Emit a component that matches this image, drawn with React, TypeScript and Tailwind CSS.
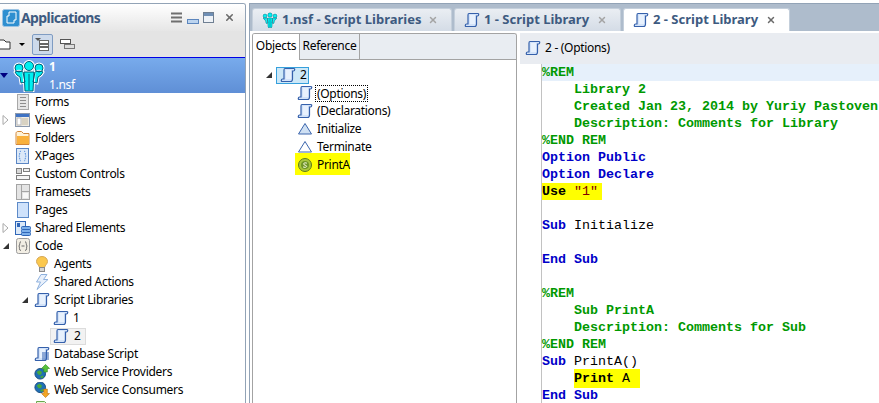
import type { ReactNode } from "react";
import { X } from "lucide-react";

const uiFont = "font-['Noto_Sans','Liberation_Sans',sans-serif]";

function ScrollIcon({ lines = false }: { lines?: boolean }) {
  return (
    <svg width="16" height="16" viewBox="0 0 16 16" className="shrink-0">
      <path d="M5 1.500h9c1 0 1 2.500-.5 2.500H12.500v8c0 1.500-.8 2.500-2 2.500H2c-1 0-1-2.500.5-2.500H4V3c0-1 .3-1.500 1-1.500z" fill="#d3e3f9" stroke="#3560ab" strokeWidth="1.200" />
      <path d="M6 3h5v9H6z" fill="#e8f1fd" />
      {lines && <path d="M8 7h7M8 9h7M8 11h7M8 13h7" stroke="#2f5fb0" strokeWidth="1.200" />}
    </svg>
  );
}

function FormsIcon() {
  return (
    <svg width="16" height="16" viewBox="0 0 16 16" className="shrink-0">
      <rect x="2.500" y="0.500" width="11" height="15" fill="#e6e6e6" stroke="#a8a8a8" />
      <path d="M5 3.500h6M5 6.500h6M5 9.500h6M5 12.500h6" stroke="#8d8d8d" />
    </svg>
  );
}

function ViewsIcon() {
  return (
    <svg width="16" height="16" viewBox="0 0 16 16" className="shrink-0">
      <rect x="0.500" y="1.500" width="14" height="13" fill="#f0ece2" stroke="#8a98ad" />
      <rect x="1" y="2" width="13" height="3" fill="#3f73c4" />
      <rect x="2" y="6" width="4" height="7" fill="#fff" stroke="#b8b8b8" />
      <rect x="7" y="6" width="6" height="7" fill="#d8d2c2" />
    </svg>
  );
}

function FolderIcon() {
  return (
    <svg width="16" height="16" viewBox="0 0 16 16" className="shrink-0">
      <path d="M1 3.500C1 2 2 1.500 3 1.500h3.500l2 2H14v11H1z" fill="#fff3d8" stroke="#d2873a" />
      <rect x="2" y="6" width="12" height="8" fill="#f9b13d" />
    </svg>
  );
}

function XPagesIcon() {
  return (
    <svg width="16" height="16" viewBox="0 0 16 16" className="shrink-0">
      <rect x="1.500" y="0.500" width="12" height="15" fill="#dce9f8" stroke="#5b86c4" />
      <path d="M6 3C4.500 3 5 6.500 4 8c1 1.500.5 5 2 5M9 3c1.500 0 1 3.500 2 5-1 1.500-.5 5-2 5" fill="none" stroke="#4f8bdc" strokeDasharray="1.500 1" />
    </svg>
  );
}

function ControlsIcon() {
  return (
    <svg width="16" height="16" viewBox="0 0 16 16" className="shrink-0">
      <rect x="1.500" y="2.500" width="5" height="5" fill="#d8d8d8" stroke="#7f7f7f" />
      <rect x="8.500" y="2.500" width="6" height="3" fill="#eee" stroke="#7f7f7f" />
      <rect x="1.500" y="9.500" width="13" height="4" fill="#f4f4f4" stroke="#7f7f7f" />
    </svg>
  );
}

function FramesetsIcon() {
  return (
    <svg width="16" height="16" viewBox="0 0 16 16" className="shrink-0">
      <rect x="1.500" y="0.500" width="13" height="15" fill="#e4e4e4" stroke="#a5a5a5" />
      <path d="M6.500 1v14M7 7.500h7" stroke="#a5a5a5" />
      <rect x="8" y="9" width="5" height="5" fill="#f8f8f8" />
    </svg>
  );
}

function PagesIcon() {
  return (
    <svg width="16" height="16" viewBox="0 0 16 16" className="shrink-0">
      <rect x="2.500" y="0.500" width="11" height="15" fill="#cfe2fb" stroke="#5d8ac8" />
    </svg>
  );
}

function SharedIcon() {
  return (
    <svg width="16" height="16" viewBox="0 0 16 16" className="shrink-0">
      <rect x="0.500" y="1.500" width="10" height="13" fill="#dce9f8" stroke="#2f66b8" />
      <rect x="2" y="3" width="3" height="4" fill="#2f66b8" />
      <rect x="6.500" y="6.500" width="9" height="3" rx="1" fill="#7db0ea" stroke="#2f66b8" />
      <rect x="6.500" y="9.500" width="9" height="3" rx="1" fill="#7db0ea" stroke="#2f66b8" />
      <rect x="6.500" y="12.500" width="9" height="3" rx="1" fill="#7db0ea" stroke="#2f66b8" />
    </svg>
  );
}

function CodeIcon() {
  return (
    <svg width="16" height="16" viewBox="0 0 16 16" className="shrink-0">
      <rect x="1.500" y="0.500" width="13" height="15" rx="2" fill="#f2eee4" stroke="#9c9c9c" />
      <path d="M6 3.500C4.500 3.500 5 7 4 8c1 1-.5 4.500 2 4.500M10 3.500c1.500 0 1 3.500 2 4.500-1 1 .5 4.500-2 4.500M6.500 8h3" fill="none" stroke="#6d6d6d" />
    </svg>
  );
}

function BulbIcon() {
  return (
    <svg width="16" height="16" viewBox="0 0 16 16" className="shrink-0">
      <path d="M8 .5c3.500 0 5.500 2.500 5.500 5 0 2.500-2.500 3.500-3 6h-5c-.5-2.500-3-3.500-3-6 0-2.500 2-5 5.500-5z" fill="#fbc84e" stroke="#d5a85a" />
      <rect x="5.500" y="11.500" width="5" height="4" fill="#d6d6d6" stroke="#8a8a8a" />
    </svg>
  );
}

function BoltIcon() {
  return (
    <svg width="16" height="16" viewBox="0 0 16 16" className="shrink-0">
      <path d="M7 .5h6L9.500 5.500H14L3 15.500l3.500-7.500H2.500z" fill="#e8f0fb" stroke="#8db0dd" />
    </svg>
  );
}

function GlobeIcon({ down = false }: { down?: boolean }) {
  return (
    <svg width="16" height="16" viewBox="0 0 18 18" className="shrink-0">
      <circle cx="7" cy={down ? 6 : 11} r="6" fill="#1f6fb5" stroke="#14477c" />
      <path d={down ? "M3 4l3-2 3 2-1 3H5zM7 9l3-1 1 2-3 1z" : "M3 9l3-2 3 2-1 3H5zM7 14l3-1 1 2-3 1z"} fill="#46a83c" />
      {down ? (
        <path d="M11 8h4v5h2.500L13 17.500 8.500 13H11z" fill="#f5a623" stroke="#b97512" strokeWidth="0.700" />
      ) : (
        <path d="M11 9h4V5h2.500L13 .5 8.500 5H11z" fill="#58c23c" stroke="#2c8a1c" strokeWidth="0.700" />
      )}
    </svg>
  );
}

function DocIcon() {
  return (
    <svg width="16" height="16" viewBox="0 0 16 16" className="shrink-0">
      <path d="M2.500 1.500h8l3 3v10h-11z" fill="#e6f4d8" stroke="#6aa84f" />
    </svg>
  );
}

function Triangle({ fill = "#cfe0f3", stroke = "#3c66ad" }: { fill?: string; stroke?: string }) {
  return (
    <svg width="16" height="16" viewBox="0 0 16 16" className="shrink-0">
      <path d="M8 2.500l6.500 10.500h-13z" fill={fill} stroke={stroke} />
    </svg>
  );
}

function SubIcon() {
  return (
    <svg width="16" height="16" viewBox="0 0 16 16" className="shrink-0">
      <circle cx="8" cy="8" r="6.500" fill="#a8c63c" stroke="#5d7a1c" />
      <circle cx="8" cy="8" r="4" fill="#6f9428" />
      <path d="M10 6.300C9 5.500 6.500 5.700 6.500 7s3.200 1 3.200 2.300S7 10.600 6 9.800" fill="none" stroke="#f4f8d8" />
    </svg>
  );
}

function Twist({ open, dark = false }: { open: boolean; dark?: boolean }) {
  if (open) {
    return (
      <svg width="8" height="8" viewBox="0 0 8 8">
        <path d="M7 1v6H1z" fill={dark ? "#000080" : "#333"} />
      </svg>
    );
  }
  return (
    <svg width="7" height="10" viewBox="0 0 7 10">
      <path d="M1 .5l5 4.500-5 4.500z" fill="#fff" stroke="#a8a8a8" />
    </svg>
  );
}

type Row = {
  label: string;
  depth: number;
  icon: ReactNode;
  twist?: "open" | "closed";
  picked?: boolean;
};

const rows: Row[] = [
  { label: "Forms", depth: 0, icon: <FormsIcon /> },
  { label: "Views", depth: 0, icon: <ViewsIcon />, twist: "closed" },
  { label: "Folders", depth: 0, icon: <FolderIcon /> },
  { label: "XPages", depth: 0, icon: <XPagesIcon /> },
  { label: "Custom Controls", depth: 0, icon: <ControlsIcon /> },
  { label: "Framesets", depth: 0, icon: <FramesetsIcon /> },
  { label: "Pages", depth: 0, icon: <PagesIcon /> },
  { label: "Shared Elements", depth: 0, icon: <SharedIcon />, twist: "closed" },
  { label: "Code", depth: 0, icon: <CodeIcon />, twist: "open" },
  { label: "Agents", depth: 1, icon: <BulbIcon /> },
  { label: "Shared Actions", depth: 1, icon: <BoltIcon /> },
  { label: "Script Libraries", depth: 1, icon: <ScrollIcon />, twist: "open" },
  { label: "1", depth: 2, icon: <ScrollIcon /> },
  { label: "2", depth: 2, icon: <ScrollIcon />, picked: true },
  { label: "Database Script", depth: 1, icon: <ScrollIcon lines /> },
  { label: "Web Service Providers", depth: 1, icon: <GlobeIcon /> },
  { label: "Web Service Consumers", depth: 1, icon: <GlobeIcon down /> },
  { label: "Java", depth: 1, icon: <DocIcon /> },
];

const depthPad = ["pl-0", "pl-[19px]", "pl-[38px]"];

function TreeRow({ row }: { row: Row }) {
  return (
    <div className={`flex h-[18px] shrink-0 items-center ${depthPad[row.depth]}`}>
      <span className="flex w-[15px] shrink-0 items-center pl-[2px]">
        {row.twist && <Twist open={row.twist === "open"} />}
      </span>
      {row.picked ? (
        <span className="-ml-[3px] flex h-[17px] items-center gap-[5px] border border-[#dcdcdc] bg-[#f2f2f2] pl-[2px] pr-[4px]">
          {row.icon}
          <span>{row.label}</span>
        </span>
      ) : (
        <>
          {row.icon}
          <span className="ml-[4px] whitespace-nowrap">{row.label}</span>
        </>
      )}
    </div>
  );
}

function AppsIcon() {
  return (
    <svg width="18" height="18" viewBox="0 0 18 18" className="shrink-0">
      <rect x="0.500" y="0.500" width="17" height="17" rx="2" fill="#2f8fd0" stroke="#9cc4e4" />
      <path d="M7 3h7v8h-2v3H5V7h2z" fill="none" stroke="#fff" />
    </svg>
  );
}

function People({ size }: { size: number }) {
  return (
    <svg width={size} height={size} viewBox="0 0 32 32" className="shrink-0">
      <g fill="#00f0f0" stroke="#fff" strokeWidth="3" paintOrder="stroke">
        <circle cx="6" cy="8" r="4" />
        <circle cx="26" cy="8" r="4" />
        <circle cx="16" cy="6" r="4.500" />
        <path d="M2 12c0-1 8-1 8 0l2 10-4 1-1-6-3-2zM30 12c0-1-8-1-8 0l-2 10 4 1 1-6 3-2z" />
        <path d="M11 12h10l-1 19h-8z" />
      </g>
      <g fill="none" stroke="#00607a" strokeWidth="1">
        <circle cx="6" cy="8" r="4" />
        <circle cx="26" cy="8" r="4" />
        <circle cx="16" cy="6" r="4.500" />
        <path d="M2 12c0-1 8-1 8 0l2 10-4 1-1-6-3-2zM30 12c0-1-8-1-8 0l-2 10 4 1 1-6 3-2zM11 12h10l-1 19h-8zM16 14v16" />
      </g>
    </svg>
  );
}

function LeftPanel() {
  return (
    <div className="flex w-[246px] shrink-0 flex-col overflow-hidden rounded-tr-[3px] border-t border-r border-[#92a3b6] bg-white text-[12px] tracking-[-0.3px] text-black">
      <div className="flex h-[27px] shrink-0 items-center bg-gradient-to-b from-white to-[#e6e6e6] pl-[2px]">
        <AppsIcon />
        <span className="ml-[1px] text-[14px] font-bold tracking-[-0.6px] text-[#3d5a80]">Applications</span>
        <div className="ml-auto flex items-center gap-[4px] pr-[10px]">
          <svg width="12" height="11" viewBox="0 0 12 11">
            <path d="M0 1.500h11M0 5.500h11M0 9.500h11" stroke="#6f6f6f" strokeWidth="2" />
          </svg>
          <svg width="12" height="5" viewBox="0 0 12 5" className="mt-[8px]">
            <rect x="0.500" y="0.500" width="11" height="4" fill="#bcd4ef" stroke="#5c86bd" />
          </svg>
          <svg width="12" height="12" viewBox="0 0 12 12">
            <rect x="0.500" y="0.500" width="10" height="10" fill="#eef2f7" stroke="#6f7f92" />
            <rect x="1" y="1" width="9" height="3" fill="#6f8fb5" />
          </svg>
          <X size={11} strokeWidth={3.500} className="ml-[5px] text-[#6b6b6b]" />
        </div>
      </div>
      <div className="flex h-[26px] shrink-0 items-center bg-[#e4e4e4]">
        <svg width="12" height="14" viewBox="0 0 12 14" className="shrink-0">
          <path d="M-2 3h6l2 2h4v7H-2z" fill="#fff" stroke="#333" />
        </svg>
        <span className="ml-[7px] h-0 w-0 border-x-[3px] border-t-[3px] border-x-transparent border-t-black" />
        <span className="ml-[7px] flex h-[21px] w-[21px] items-center justify-center rounded-[2px] border border-[#7f9cc2] bg-[#cddaeb]">
          <svg width="15" height="15" viewBox="0 0 15 15">
            <path d="M0 1h6L3 4z" fill="#555" />
            <rect x="4.500" y="3.500" width="9" height="10" fill="#fff" stroke="#666" />
            <path d="M5 7h8M5 10h8" stroke="#666" strokeWidth="2" />
          </svg>
        </span>
        <svg width="15" height="10" viewBox="0 0 15 10" className="ml-[7px]">
          <rect x="0.500" y="0.500" width="10" height="4" fill="#fff" stroke="#555" />
          <rect x="4.500" y="5.500" width="10" height="4" fill="#ddd" stroke="#777" />
        </svg>
      </div>
      <div className="h-px shrink-0 bg-[#0000e6]" />
      <div className="flex h-[35px] shrink-0 items-center bg-gradient-to-b from-[#78abec] to-[#5f8fd6] text-white">
        <span className="flex w-[13px] shrink-0">
          <span className="h-0 w-0 border-x-[4px] border-t-[5px] border-x-transparent border-t-[#000080]" />
        </span>
        <People size={32} />
        <div className="ml-[4px] flex flex-col gap-[2px] leading-[16px]">
          <span className="font-bold">1</span>
          <span>1.nsf</span>
        </div>
      </div>
      <div className="flex flex-col">
        {rows.map((row) => (
          <TreeRow key={row.label} row={row} />
        ))}
      </div>
    </div>
  );
}

function Tab({ icon, label, active, width }: { icon: ReactNode; label: string; active?: boolean; width: string }) {
  return (
    <div
      className={`flex h-[23px] shrink-0 items-center rounded-t-[3px] border border-b-0 pl-[9px] pr-[13px] ${width} ${
        active ? "border-[#c4cfdb] bg-white" : "border-[#c4cfdb] bg-gradient-to-b from-[#eaeef3] to-[#d4dce6]"
      }`}
    >
      {icon}
      <span className="ml-[4px] whitespace-nowrap text-[13px] font-bold tracking-normal text-[#3d5a80]">{label}</span>
      <X size={10} strokeWidth={3.500} className={`ml-auto ${active ? "text-[#6b6b6b]" : "text-[#a4a4a4]"}`} />
    </div>
  );
}

function ObjectsPanel() {
  return (
    <div className="flex w-[265px] shrink-0 flex-col overflow-hidden rounded-t-[3px] border border-b-0 border-[#a3a3a3] bg-white">
      <div className="flex h-[26px] shrink-0 border-b border-[#a3a3a3] bg-[#e9edf2]">
        <span className="-mb-px flex w-[47px] items-center justify-center border-r border-[#a3a3a3] bg-white pb-[2px]">Objects</span>
        <span className="flex w-[60px] items-center justify-center border-r border-[#a3a3a3] pb-[1px]">Reference</span>
      </div>
      <div className="flex flex-col pt-[6px]">
        <div className="flex h-[18px] items-center pl-[12px]">
          <Twist open />
          <span className="ml-[3px] flex h-[17px] w-[33px] items-center gap-[4px] border border-[#36a0dc] bg-[#cde8f8] pl-[3px]">
            <ScrollIcon />
            <span>2</span>
          </span>
        </div>
        <div className="flex flex-col pl-[44px]">
          <div className="flex h-[18px] items-center gap-[2px]">
            <ScrollIcon />
            <span className="border border-dotted border-black pl-[1px] pr-[1px] leading-[15px]">(Options)</span>
          </div>
          <div className="flex h-[18px] items-center gap-[4px]">
            <ScrollIcon />
            <span>(Declarations)</span>
          </div>
          <div className="flex h-[18px] items-center gap-[4px]">
            <Triangle />
            <span>Initialize</span>
          </div>
          <div className="flex h-[18px] items-center gap-[4px]">
            <Triangle fill="#fff" />
            <span>Terminate</span>
          </div>
          <div className="-ml-[2px] -mt-[3px] flex h-[22px] w-[55px] items-center gap-[4px] bg-[#ffff00] pl-[2px] pt-[2px]">
            <SubIcon />
            <span>PrintA</span>
          </div>
        </div>
      </div>
    </div>
  );
}

type CodeLine = { text: ReactNode; tone: "rem" | "kw" | "plain"; first?: boolean };

const codeLines: CodeLine[] = [
  { text: "%REM", tone: "rem", first: true },
  { text: "    Library 2", tone: "rem" },
  { text: "    Created Jan 23, 2014 by Yuriy Pastoven", tone: "rem" },
  { text: "    Description: Comments for Library", tone: "rem" },
  { text: "%END REM", tone: "rem" },
  { text: "Option Public", tone: "kw" },
  { text: "Option Declare", tone: "kw" },
  {
    text: (
      <span className="bg-[#ffff00] py-[1px] pr-[4px] text-black">
        Use <span className="font-normal text-[#800000]">"1"</span>
      </span>
    ),
    tone: "kw",
  },
  { text: " ", tone: "plain" },
  {
    text: (
      <>
        Sub <span className="font-normal text-black">Initialize</span>
      </>
    ),
    tone: "kw",
  },
  { text: " ", tone: "plain" },
  { text: "End Sub", tone: "kw" },
  { text: " ", tone: "plain" },
  { text: "%REM", tone: "rem" },
  { text: "    Sub PrintA", tone: "rem" },
  { text: "    Description: Comments for Sub", tone: "rem" },
  { text: "%END REM", tone: "rem" },
  {
    text: (
      <>
        Sub <span className="font-normal text-black">PrintA()</span>
      </>
    ),
    tone: "kw",
  },
  {
    text: (
      <>
        {"    "}
        <span className="bg-[#ffff00] py-[2px] pr-[10px] text-black">
          Print <span className="font-normal">A</span>
        </span>
      </>
    ),
    tone: "kw",
  },
  { text: "End Sub", tone: "kw" },
];

const toneClass = {
  rem: "font-bold text-[#009900]",
  kw: "font-bold text-[#0000c8]",
  plain: "text-black",
};

function CodePanel() {
  return (
    <div className="ml-[3px] flex min-w-0 flex-1 flex-col overflow-hidden">
      <div className="flex h-[31px] shrink-0 items-center gap-[4px] bg-[#e9ecf1] pb-[2px] pl-[5px]">
        <ScrollIcon />
        <span className="whitespace-nowrap">2 - (Options)</span>
      </div>
      <div className="ml-[21px] flex flex-1 flex-col border-l border-[#c2c2c2] font-['Liberation_Mono',monospace] text-[13.333px] leading-[17px] tracking-normal">
        {codeLines.map((line, i) => (
          <div
            key={i}
            className={`h-[17px] shrink-0 whitespace-pre ${toneClass[line.tone]} ${line.first ? "bg-[#e6f0fb]" : ""}`}
          >
            {line.text}
          </div>
        ))}
      </div>
    </div>
  );
}

export default function App() {
  return (
    <div className={`flex h-[403px] w-[879px] overflow-hidden bg-white pt-[3px] ${uiFont}`}>
      <LeftPanel />
      <div className="ml-[3px] flex min-w-0 flex-1 flex-col overflow-hidden border-t border-l border-[#92a3b6] bg-[#aebccc] text-[12px] tracking-[-0.3px] text-black">
        <div className="flex h-[27px] shrink-0 items-end gap-[2px] pl-[2px]">
          <Tab width="w-[200px]" icon={<People size={16} />} label="1.nsf - Script Libraries" />
          <Tab width="w-[167px]" icon={<ScrollIcon />} label="1 - Script Library" />
          <Tab width="w-[167px]" icon={<ScrollIcon />} label="2 - Script Library" active />
        </div>
        <div className="flex min-h-0 flex-1 bg-white pl-[2px] pt-[2px]">
          <ObjectsPanel />
          <CodePanel />
        </div>
      </div>
    </div>
  );
}
